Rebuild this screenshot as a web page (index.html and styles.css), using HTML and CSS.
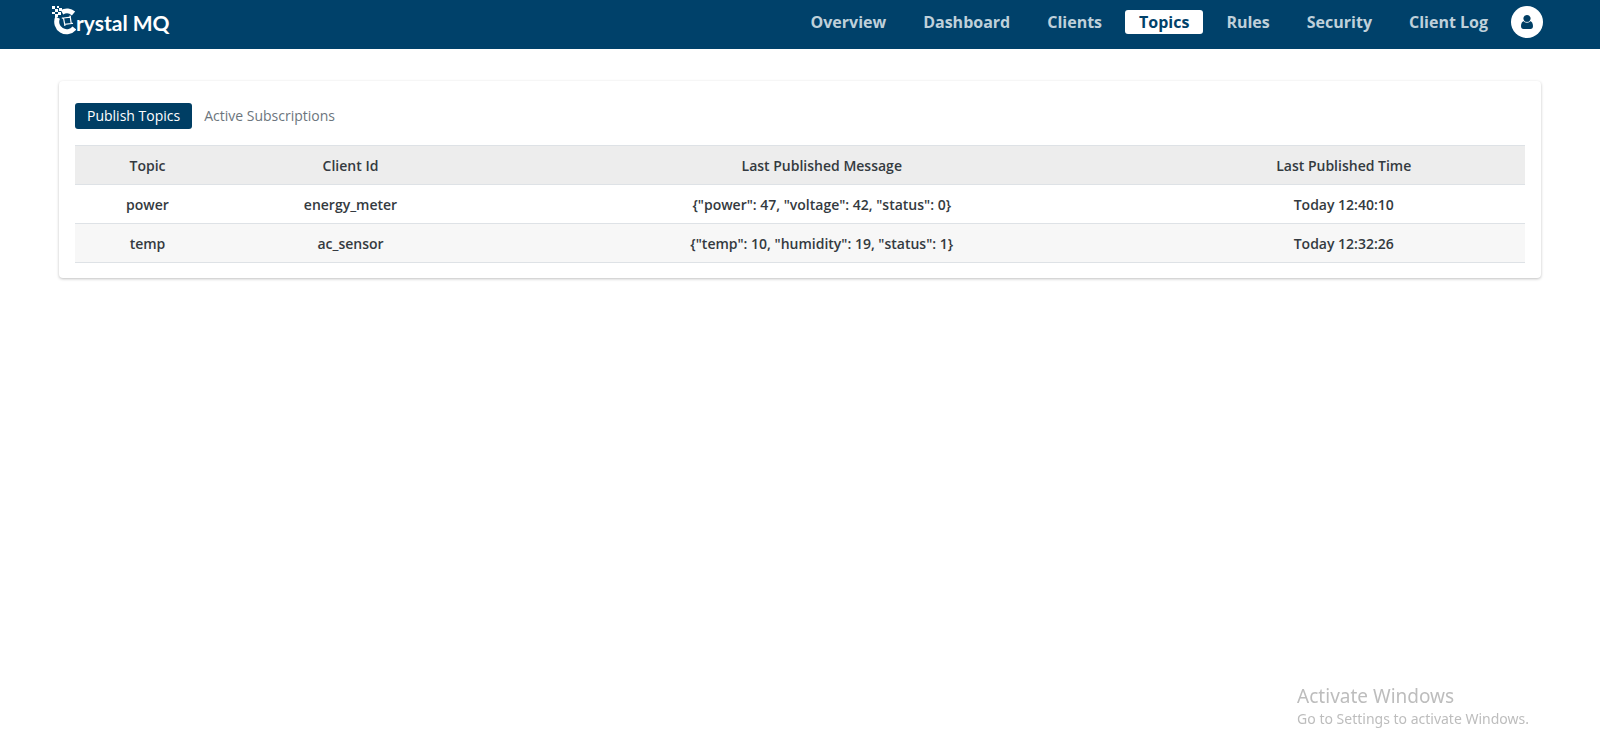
FILE: index.html
```html
<!DOCTYPE html>
<html lang="en">
<head>
<meta charset="utf-8">
<title>Crystal MQ - Topics</title>
<link rel="stylesheet" href="styles.css">
</head>
<body>
<header class="navbar">
  <a class="brand" href="#" aria-label="Crystal MQ">
    <svg class="brand-mark" viewBox="0 0 24 32" width="24" height="32" aria-hidden="true">
      <path fill="#fff" d="M0 0h3v3H0zM5 0h2v2H5zM3 3h3v3H3zM7 2h3v3H7zM0 6h3v2H0zM6 6h3v3H6zM3 8h3v3H3z"/>
      <g fill="none" stroke="#fff">
        <path stroke-width="5" d="M10 6.300A10 10 0 0 1 21.500 7.500M5.600 11.600A10 10 0 0 0 22.500 22"/>
        <path stroke-width="1.200" d="M11.500 12l6.800-.8.9 6.300-6.500.8zM9.800 12.200h2M18 9.500l.3 2M19 17.500l2-.2M12.600 18l.3 2"/>
      </g>
    </svg>
    <span class="brand-text">rystal MQ</span>
  </a>
  <nav class="nav" aria-label="Main">
    <a class="nav-link" href="#">Overview</a>
    <a class="nav-link" href="#">Dashboard</a>
    <a class="nav-link" href="#">Clients</a>
    <a class="nav-link nav-link-active" href="#" aria-current="page">Topics</a>
    <a class="nav-link" href="#">Rules</a>
    <a class="nav-link" href="#">Security</a>
    <a class="nav-link" href="#">Client Log</a>
    <button class="avatar" type="button" aria-label="Account">
      <svg viewBox="0 0 12 14" width="12" height="14" aria-hidden="true">
        <path fill="#003e64" d="M6 0a3.500 3.500 0 0 1 2.600 5.900C10.800 6.200 12 8.200 12 11c0 1.700-.9 3-2.500 3h-7C.9 14 0 12.700 0 11c0-2.800 1.200-4.800 3.400-5.100A3.500 3.500 0 0 1 6 0z"/>
        <path fill="none" stroke="#fff" stroke-width=".8" d="M3 6.300c1.800 1.500 4.200 1.500 6 0"/>
      </svg>
    </button>
  </nav>
</header>
<main class="page">
  <section class="card">
    <div class="tabs" role="tablist">
      <button class="tab tab-active" type="button" role="tab" aria-selected="true">Publish Topics</button>
      <button class="tab" type="button" role="tab" aria-selected="false">Active Subscriptions</button>
    </div>
    <table class="topics">
      <colgroup><col class="col-topic"><col class="col-client"><col class="col-message"><col class="col-time"></colgroup>
      <thead>
        <tr><th scope="col">Topic</th><th scope="col">Client Id</th><th scope="col">Last Published Message</th><th scope="col">Last Published Time</th></tr>
      </thead>
      <tbody>
        <tr><td>power</td><td>energy_meter</td><td>{"power": 47, "voltage": 42, "status": 0}</td><td>Today 12:40:10</td></tr>
        <tr><td>temp</td><td>ac_sensor</td><td>{"temp": 10, "humidity": 19, "status": 1}</td><td>Today 12:32:26</td></tr>
      </tbody>
    </table>
  </section>
</main>
<aside class="watermark">
  <p class="watermark-title">Activate Windows</p>
  <p class="watermark-text">Go to Settings to activate Windows.</p>
</aside>
</body>
</html>
```
FILE: styles.css
```css
* { box-sizing: border-box; }

body {
  margin: 0;
  background: #fff;
  color: #343a40;
  font-family: "Open Sans", "Noto Sans", sans-serif;
  font-size: 14px;
}

.navbar {
  display: flex;
  align-items: flex-start;
  justify-content: space-between;
  height: 49px;
  padding: 6px 57px 0 52px;
  background: #00416a;
}

.brand {
  display: flex;
  color: #fff;
  text-decoration: none;
}

.brand-text {
  font-family: Lato, "Open Sans", sans-serif;
  font-size: 21px;
  font-weight: 700;
  line-height: 34px;
}

.nav {
  display: flex;
  align-items: center;
  gap: 9px;
}

.nav-link {
  padding: 0 14px;
  border-radius: 3px;
  color: #bfd0da;
  font-size: 16px;
  font-weight: 700;
  line-height: 24px;
  text-decoration: none;
}

.nav-link-active {
  background: #fff;
  color: #00416a;
}

.avatar {
  display: grid;
  place-items: center;
  width: 32px;
  height: 32px;
  padding: 0;
  border: 0;
  border-radius: 50%;
  background: #fff;
}

.page { padding: 32px 59px; }

.card {
  padding: 22px 16px 15px;
  border-radius: 4px;
  box-shadow: 0 1px 3px rgba(0, 0, 0, 0.25);
}

.tabs {
  display: flex;
  margin-bottom: 16px;
}

.tab {
  padding: 0 12px;
  border: 0;
  border-radius: 3px;
  background: none;
  color: #6c757d;
  font: inherit;
  line-height: 26px;
}

.tab-active {
  background: #003e64;
  color: #fff;
}

.topics {
  width: 100%;
  border-collapse: collapse;
  table-layout: fixed;
  font-weight: 600;
  line-height: 18px;
  text-align: center;
}

.col-topic { width: 10%; }
.col-client { width: 18%; }
.col-message { width: 47%; }
.col-time { width: 25%; }

.topics th,
.topics td {
  padding: 11px 8px 9px;
  border-top: 1px solid #dee2e6;
  border-bottom: 1px solid #dee2e6;
}

.topics th {
  background: #ededed;
  font-weight: inherit;
}

.topics tbody tr:nth-child(even) { background: #f7f7f7; }

.watermark {
  position: fixed;
  right: 71px;
  bottom: 27px;
  color: #bdbdbd;
  font-family: "Noto Sans", "Open Sans", sans-serif;
}

.watermark p { margin: 0; }

.watermark-title {
  font-size: 19px;
  line-height: 26px;
}

.watermark-text {
  font-size: 14px;
  line-height: 20px;
}
```
